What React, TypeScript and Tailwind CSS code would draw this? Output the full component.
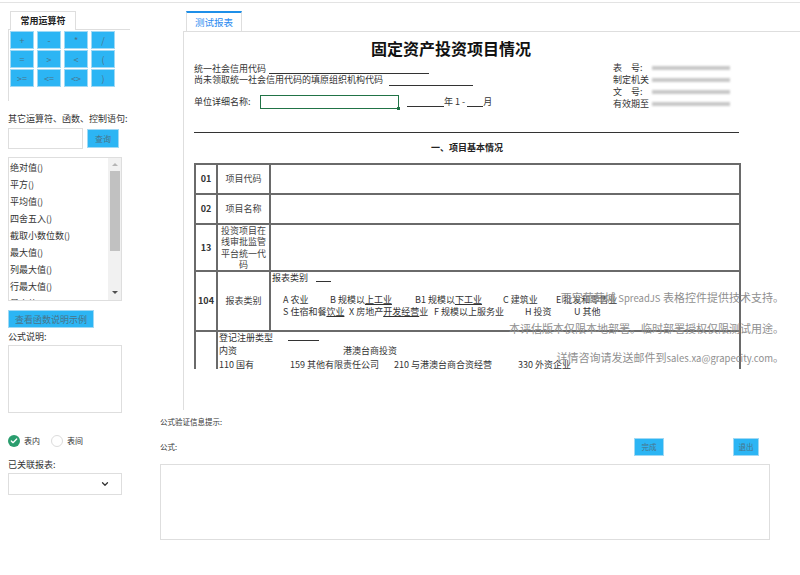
import { ChevronDown, Check } from "lucide-react";

const ops = ["+", "-", "*", "/", "=", ">", "<", "(", ">=", "<=", "<>", ")"];
const funcs = [
  "绝对值()",
  "平方()",
  "平均值()",
  "四舍五入()",
  "截取小数位数()",
  "最大值()",
  "列最大值()",
  "行最大值()",
  "最小值()",
];

function BlueButton({ label, className }: { label: string; className: string }) {
  return (
    <button
      type="button"
      className={`bg-[#2cb5f4] text-[#4a7489] border border-[#9fd9f5] flex items-center justify-center leading-none ${className}`}
    >
      {label}
    </button>
  );
}

function LeftPanel() {
  return (
    <div className="w-[160px] shrink-0 pl-[8px] pt-[8px] text-[9px] text-[#333]">
      {/* tab */}
      <div className="flex w-[122px] h-[19px] border-b border-[#dedede]">
        <div className="ml-[2px] w-[66px] h-[19px] border border-b-0 border-[#dedede] bg-white -mb-px flex items-center justify-center font-bold text-[9px] text-[#222]">
          常用运算符
        </div>
      </div>
      <div className="h-[71px] border-l border-[#dedede] pl-px pt-px">
        <div className="grid grid-cols-[24px_24px_24px_24px] gap-x-[3px] gap-y-px">
          {ops.map((o) => (
            <BlueButton key={o} label={o} className="h-[18px] text-[9px]" />
          ))}
        </div>
      </div>

      <div className="mt-[12px] h-[12px] leading-[12px]">其它运算符、函数、控制语句:</div>
      <div className="mt-[3px] flex items-center">
        <div className="w-[75px] h-[21px] border border-[#dedede]" />
        <BlueButton label="查询" className="ml-[4px] w-[32px] h-[19px] text-[8px]" />
      </div>

      {/* function list */}
      <div className="mt-[8px] w-[114px] h-[144px] border border-[#dedede] flex overflow-hidden">
        <div className="flex-1 pt-px pl-[1px]">
          {funcs.map((f) => (
            <div key={f} className="h-[17px] leading-[17px] whitespace-nowrap">
              {f}
            </div>
          ))}
        </div>
        <div className="w-[13px] bg-[#f1f1f1] flex flex-col items-center">
          <div className="mt-[5px] w-0 h-0 border-x-[3px] border-x-transparent border-b-[3px] border-b-[#b5b5b5]" />
          <div className="mt-[5px] w-[10px] h-[80px] bg-[#c1c1c1]" />
          <div className="mt-auto mb-[6px] w-0 h-0 border-x-[3px] border-x-transparent border-t-[3px] border-t-[#505050]" />
        </div>
      </div>

      <BlueButton label="查看函数说明示例" className="mt-[9px] w-[86px] h-[18px] text-[9px]" />
      <div className="mt-[3px] h-[12px] leading-[12px]">公式说明:</div>
      <div className="mt-[2px] w-[114px] h-[68px] border border-[#dedede]" />

      <div className="mt-[22px] h-[12px] flex items-center text-[8px] text-[#333]">
        <div className="w-[12px] h-[12px] rounded-full bg-[#2a9d6e] flex items-center justify-center">
          <Check size={8} strokeWidth={4} color="white" />
        </div>
        <span className="ml-[4px]">表内</span>
        <div className="ml-[11px] w-[12px] h-[12px] rounded-full border border-[#dcdcdc]" />
        <span className="ml-[4px]">表间</span>
      </div>

      <div className="mt-[12px] h-[12px] leading-[12px]">已关联报表:</div>
      <div className="mt-[2px] w-[114px] h-[22px] border border-[#dedede] flex items-center justify-end pr-[11px]">
        <ChevronDown size={10} strokeWidth={3} color="#333" />
      </div>
    </div>
  );
}

function Under({ w, className = "" }: { w: string; className?: string }) {
  return <span className={`inline-block border-b border-[#333] ${w} ${className}`} />;
}

function Sheet() {
  const cellB = "border-2 border-[#6a6a6a]";
  return (
    <div className="h-[337px] overflow-hidden pl-[10px] text-[9px] text-[#333]">
      <div className="pt-[6px] pl-[177px] text-[16px] leading-[20px] font-bold text-[#111] whitespace-nowrap">
        固定资产投资项目情况
      </div>

      <div className="mt-[4px] flex">
        <div className="w-[419px] pt-[1px]">
          <div className="flex h-[11px] leading-[11px]">
            <span>统一社会信用代码</span>
            <Under w="w-[160px] h-[11px]" className="ml-[3px]" />
          </div>
          <div className="flex h-[11px] leading-[11px]">
            <span>尚未领取统一社会信用代码的填原组织机构代码</span>
            <Under w="w-[84px] h-[12px]" className="ml-[6px]" />
          </div>
          <div className="mt-[10px] flex items-center h-[14px] whitespace-nowrap">
            <span className="w-[66px]">单位详细名称:</span>
            <div className="relative w-[139px] h-[14px] border-[1.5px] border-[#217346]">
              <div className="absolute -right-[2px] -bottom-[2px] w-[3px] h-[3px] bg-[#217346]" />
            </div>
            <Under w="w-[37px] h-[9px]" className="ml-[8px]" />
            <span>年 1 -&nbsp;</span>
            <Under w="w-[16px] h-[9px]" />
            <span>月</span>
          </div>
        </div>
        <div className="leading-[12px]">
          {["表　号:", "制定机关", "文　号:", "有效期至"].map((t) => (
            <div key={t} className="flex items-center h-[12px]">
              <span className="w-[39px] whitespace-nowrap">{t}</span>
              <span className="w-[78px] h-[4px] bg-[#c8c8c8] blur-[1px]" />
            </div>
          ))}
        </div>
      </div>

      <div className="mt-[22px] w-[545px] border-t border-[#333]" />
      <div className="mt-[9px] pl-[237px] h-[12px] leading-[12px] font-bold text-[#222] whitespace-nowrap">
        一、项目基本情况
      </div>

      <table className="mt-[9px] w-[545px] table-fixed border-collapse">
        <colgroup>
          <col className="w-[22px]" />
          <col className="w-[53px]" />
          <col className="w-[470px]" />
        </colgroup>
        <tbody>
          <tr className="h-[30px]">
            <td className={`${cellB} text-center font-bold`}>01</td>
            <td className={`${cellB} text-center text-[#444]`}>项目代码</td>
            <td className={cellB} />
          </tr>
          <tr className="h-[30px]">
            <td className={`${cellB} text-center font-bold`}>02</td>
            <td className={`${cellB} text-center text-[#444]`}>项目名称</td>
            <td className={cellB} />
          </tr>
          <tr className="h-[45px]">
            <td className={`${cellB} text-center font-bold`}>13</td>
            <td className={`${cellB} text-center text-[#444] leading-[11.3px] px-[1px]`}>
              投资项目在线审批监管平台统一代码
            </td>
            <td className={cellB} />
          </tr>
          <tr className="h-[60px]">
            <td className={`${cellB} text-center font-bold`}>104</td>
            <td className={`${cellB} text-center text-[#444]`}>报表类别</td>
            <td className={`${cellB} align-top pl-[1px] whitespace-nowrap`}>
              <div className="h-[12px] leading-[12px] flex">
                <span>报表类别</span>
                <Under w="w-[15px] h-[10px]" className="ml-[8px]" />
              </div>
              <div className="mt-[10px] pl-[11px] h-[12px] leading-[12px] flex">
                <span className="w-[47px]">A 农业</span>
                <span className="w-[85px]">
                  B 规模以<span className="underline">上工业</span>
                </span>
                <span className="w-[88px]">
                  B1 规模以<span className="underline">下工业</span>
                </span>
                <span className="w-[53px]">C 建筑业</span>
                <span>E 批发和零售业</span>
              </div>
              <div className="pl-[11px] h-[12px] leading-[12px] flex">
                <span className="w-[66px]">
                  S 住宿和餐<span className="underline">饮业</span>
                </span>
                <span className="w-[85px]">
                  X 房地产<span className="underline">开发经营</span>业
                </span>
                <span className="w-[91px]">F 规模以上服务业</span>
                <span className="w-[49px]">H 投资</span>
                <span>U 其他</span>
              </div>
            </td>
          </tr>
          <tr className="h-[60px]">
            <td className={cellB} />
            <td colSpan={2} className={`${cellB} align-top pl-[1px] whitespace-nowrap`}>
              <div className="h-[12px] leading-[12px] flex">
                <span className="w-[69px]">登记注册类型</span>
                <Under w="w-[31px] h-[9px]" />
              </div>
              <div className="h-[14px] leading-[14px] flex">
                <span className="w-[124px]">内资</span>
                <span>港澳台商投资</span>
              </div>
              <div className="h-[13px] leading-[13px] flex">
                <span className="w-[71px]">110 国有</span>
                <span className="w-[104px]">159 其他有限责任公司</span>
                <span className="w-[124px]">210 与港澳台商合资经营</span>
                <span>330 外资企业</span>
              </div>
            </td>
          </tr>
        </tbody>
      </table>
    </div>
  );
}

function Watermark() {
  return (
    <div className="absolute right-[16px] top-[258px] text-right text-[11px] leading-[14px] text-[#8f8f8f] whitespace-nowrap pointer-events-none">
      <div>
        西安葡萄城 <span className="text-[9.5px]">SpreadJS</span> 表格控件提供技术支持。
      </div>
      <div className="mt-[15.5px]">本评估版本仅限本地部署。临时部署授权仅限测试用途。</div>
      <div className="mt-[15.5px]">
        详情咨询请发送邮件到<span className="text-[9.5px]">sales.xa@grapecity.com</span>。
      </div>
    </div>
  );
}

function RightPanel() {
  return (
    <div className="flex-1 pt-[8px]">
      <div className="ml-[23px]">
        <div className="flex">
          <div className="ml-[3px] w-[56px] h-[20px] border-t-2 border-t-[#1e8fe8] border-x border-x-[#dedede] flex items-center justify-center text-[9.5px] text-[#2d8cf0]">
            测试报表
          </div>
        </div>
        <div className="relative h-[379px] border-t border-l border-[#dedede] overflow-hidden">
          <Sheet />
          <Watermark />
        </div>
      </div>

      <div className="text-[7.5px] text-[#333]">
        <div className="mt-[6px] h-[12px] leading-[12px]">公式验证信息提示:</div>
        <div className="mt-[10px] w-[610px] h-[18px] flex items-center">
          <span>公式:</span>
          <div className="flex-1" />
          <BlueButton label="完成" className="w-[30px] h-[18px] text-[7.5px]" />
          <BlueButton label="退出" className="ml-[69px] w-[26px] h-[18px] text-[7.5px]" />
          <div className="w-[11px]" />
        </div>
        <div className="mt-[8px] w-[610px] h-[76px] border border-[#dedede]" />
      </div>
    </div>
  );
}

export default function App() {
  return (
    <div className="w-[800px] h-[575px] bg-white overflow-hidden font-['Noto_Sans_CJK_SC','Noto_Sans',sans-serif]">
      <div className="mt-[2px] border-t border-[#e3e3e3] flex">
        <LeftPanel />
        <RightPanel />
      </div>
    </div>
  );
}
